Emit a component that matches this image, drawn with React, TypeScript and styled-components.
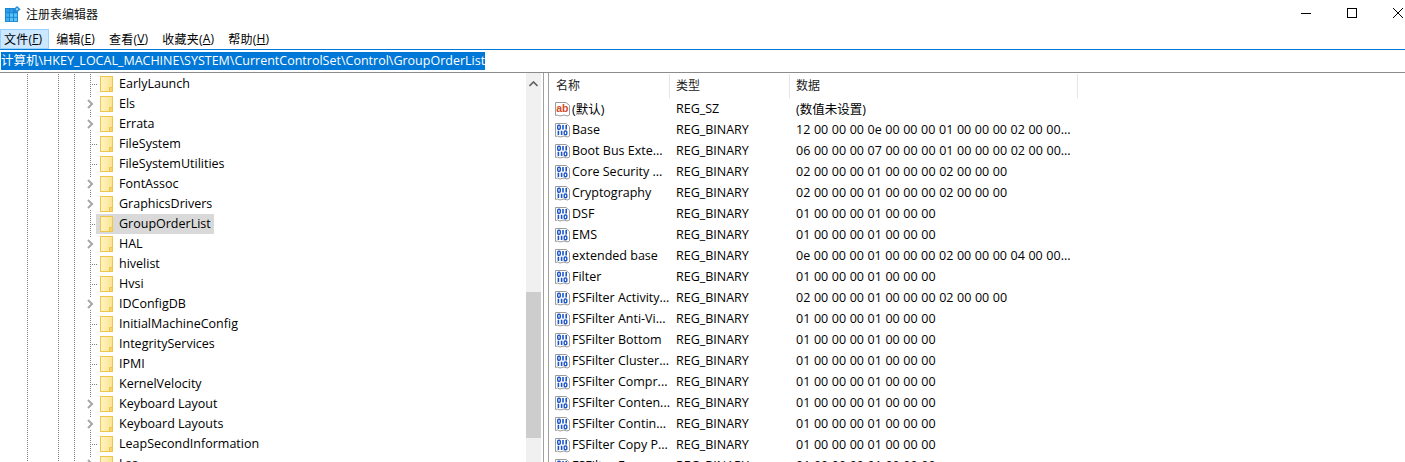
import * as React from "react"
import styled, { createGlobalStyle } from "styled-components"

const GlobalStyles = createGlobalStyle`
  html, body {
    margin: 0;
    padding: 0;
    background: #fff;
    overflow: hidden;
  }
`

const Window = styled.div`
  width: 1405px;
  height: 462px;
  overflow: hidden;
  display: flex;
  flex-direction: column;
  color: #000;
  font-family: "Open Sans", "Noto Sans CJK SC", sans-serif;
  font-size: 12.5px;
`

const TitleBar = styled.div`
  height: 29px;
  display: flex;
  align-items: center;
  padding: 0 0 1px 5px;
  box-sizing: border-box;
  flex: none;
`

const TitleText = styled.span`
  margin-left: 5px;
  font-size: 12px;
  color: #111;
`

const WindowButtons = styled.div`
  margin-left: auto;
  margin-right: -16px;
  margin-bottom: 2px;
  display: flex;
`

const WindowButton = styled.div`
  width: 46px;
  height: 26px;
  display: flex;
  align-items: center;
  justify-content: center;
`

const MenuBar = styled.div`
  height: 20px;
  flex: none;
  display: flex;
  border-bottom: 1px solid #0078d7;
`

const MenuItem = styled.div<{ $active?: boolean }>`
  height: 20px;
  padding: 0 6px 1px 3px;
  margin-right: 3px;
  display: flex;
  align-items: center;
  font-size: 12px;
  letter-spacing: 0.2px;
  box-sizing: border-box;
  background: ${(p) => (p.$active ? "#cce8ff" : "transparent")};
  border: 1px solid ${(p) => (p.$active ? "#99d1ff" : "transparent")};
`

const Hotkey = styled.u`
  text-underline-offset: 1px;
`

const AddressBar = styled.div`
  height: 23px;
  flex: none;
  display: flex;
  align-items: center;
  padding: 0 0 1px 1px;
  box-sizing: border-box;
  border-bottom: 1px solid #8c8c8c;
`

const AddressText = styled.span`
  background: #0078d7;
  color: #fff;
  height: 18px;
  line-height: 18px;
  font-size: 12.5px;
  white-space: nowrap;
`

const Panes = styled.div`
  flex: 1;
  display: flex;
  min-height: 0;
`

const TreePane = styled.div`
  width: 541px;
  flex: none;
  display: flex;
`

const Tree = styled.div`
  width: 526px;
  flex: none;
  padding-top: 1px;
  overflow: hidden;
`

const dots = "repeating-linear-gradient(to bottom, #808080 0 1px, transparent 1px 2px)"

const Guides = styled.div`
  flex: none;
  width: 86px;
  height: 20px;
  background-image: ${dots}, ${dots}, ${dots};
  background-size: 1px 100%;
  background-repeat: no-repeat;
  background-position: 27px 0, 58px 0, 74px 0;
`

const TreeRow = styled.div`
  height: 20px;
  display: flex;
  align-items: center;
`

const Expander = styled.div`
  width: 14px;
  height: 20px;
  flex: none;
  display: flex;
  align-items: center;
  background-image: ${dots};
  background-size: 1px 100%;
  background-repeat: no-repeat;
  background-position: 4px 0;
`

const BranchTick = styled.div`
  width: 6px;
  height: 1px;
  margin-left: 6px;
  background-image: repeating-linear-gradient(to right, #808080 0 1px, transparent 1px 2px);
`

const FolderSlot = styled.div`
  flex: none;
  width: 13px;
  height: 16px;
  display: flex;
  margin-right: 6px;
`

const TreeLabel = styled.div`
  height: 20px;
  padding-bottom: 1px;
  box-sizing: border-box;
  display: flex;
  align-items: center;
  white-space: nowrap;
`

const TreeEntry = styled.div<{ $selected?: boolean }>`
  display: flex;
  align-items: center;
  height: 20px;
  margin-left: -4px;
  padding: 0 3px 0 4px;
  background: ${(p) => (p.$selected ? "#d9d9d9" : "transparent")};
`

const Scrollbar = styled.div`
  width: 15px;
  flex: none;
  background: #f0f0f0;
  display: flex;
  flex-direction: column;
`

const ScrollArrow = styled.div`
  height: 22px;
  display: flex;
  align-items: center;
  justify-content: center;
  flex: none;
`

const ScrollThumb = styled.div`
  height: 146px;
  margin-top: 197px;
  flex: none;
  background: #cdcdcd;
`

const Splitter = styled.div`
  width: 4px;
  flex: none;
  border-left: 1px solid #a0a0a0;
  border-right: 1px solid #a0a0a0;
  margin-left: 2px;
`

const ListPane = styled.div`
  flex: 1;
  min-width: 0;
  overflow: hidden;
`

const ListHeader = styled.div`
  height: 24px;
  margin-top: 1px;
  display: grid;
  grid-template-columns: 120px 120px 288px;
  padding-left: 1px;
`

const HeaderCell = styled.div`
  display: flex;
  align-items: center;
  padding: 0 0 2px 6px;
  border-right: 1px solid #e5e5e5;
  font-size: 12px;
  color: #222;
`

const ListRow = styled.div`
  height: 21px;
  display: grid;
  grid-template-columns: 120px 120px 288px;
  align-items: center;
  padding-left: 1px;
  white-space: nowrap;
`

const NameCell = styled.div`
  display: flex;
  align-items: center;
  padding-left: 5px;
  gap: 2px;
`

const ValueCell = styled.div`
  padding-left: 6px;
`

const DataCell = styled(ValueCell)`
  word-spacing: 0.35px;
`

const Chevron = () => (
  <svg width="9" height="12" viewBox="0 0 9 12">
    <rect width="9" height="12" fill="#fff" />
    <path d="M2 2 L6 6 L2 10" fill="none" stroke="#a6a6a6" strokeWidth="2" />
  </svg>
)

const Folder = () => (
  <svg width="13" height="16" viewBox="0 0 13 16">
    <defs>
      <linearGradient id="folderFill" x1="0" x2="1" y1="0" y2="0">
        <stop offset="0" stopColor="#fff4c6" />
        <stop offset="1" stopColor="#fbe38f" />
      </linearGradient>
    </defs>
    <rect x="0.5" y="0.5" width="12" height="15" fill="url(#folderFill)" stroke="#eec64b" />
    <path d="M9.5 15 V11.5 H12.5" fill="#f8d766" stroke="#eec64b" />
    <rect x="10" y="12" width="2" height="3" fill="#f8d766" />
  </svg>
)

const DocShape = () => (
  <path d="M0.5 1.5 H11 L14.5 4.5 V14 L12 15 L9 14 L5 15 L2.5 14 L0.5 14.6 Z" fill="#fff" stroke="#9c9c9c" />
)

const BinIcon = () => (
  <svg width="15" height="16" viewBox="0 0 15 16">
    <DocShape />
    <rect x="2.7" y="3.2" width="2.6" height="4" rx="1" fill="none" stroke="#1c55c9" strokeWidth="1.4" />
    <path d="M8 3 V7.4 M11.2 3 V7.4" stroke="#1c55c9" strokeWidth="1.6" />
    <path d="M3.4 8.8 V13 M6.6 8.8 V13" stroke="#1c55c9" strokeWidth="1.6" />
    <rect x="9.2" y="9" width="2.6" height="3.8" rx="1" fill="none" stroke="#1c55c9" strokeWidth="1.4" />
  </svg>
)

const AbGlyph = styled.text`
  font-family: "Liberation Sans", sans-serif;
  font-size: 10.5px;
  font-weight: 700;
  fill: #d4492a;
`

const AbIcon = () => (
  <svg width="15" height="16" viewBox="0 0 15 16">
    <DocShape />
    <AbGlyph x="1.2" y="11">ab</AbGlyph>
  </svg>
)

const AppIcon = () => (
  <svg width="16" height="16" viewBox="0 0 16 16">
    <rect x="0" y="2" width="13" height="14" fill="#1a86d6" />
    <rect x="1" y="3" width="3" height="3.4" fill="#2f9be6" />
    <rect x="5" y="3" width="3" height="3.4" fill="#2f9be6" />
    <rect x="1" y="7.4" width="3" height="3.4" fill="#3fb0ee" />
    <rect x="5" y="7.4" width="3" height="3.4" fill="#5cc4f5" />
    <rect x="9" y="7.4" width="3" height="3.4" fill="#5cc4f5" />
    <rect x="1" y="11.8" width="3" height="3.4" fill="#3fb0ee" />
    <rect x="5" y="11.8" width="3" height="3.4" fill="#5cc4f5" />
    <rect x="9" y="11.8" width="3" height="3.4" fill="#5cc4f5" />
    <path d="M12 0 L15.6 3.2 L12 6.6 L8.6 3.2 Z" fill="#2a8fd0" />
    <rect x="11" y="2.2" width="2" height="2" fill="#8fd6f8" />
  </svg>
)

const treeItems: [string, boolean][] = [
  ["EarlyLaunch", false],
  ["Els", true],
  ["Errata", true],
  ["FileSystem", false],
  ["FileSystemUtilities", false],
  ["FontAssoc", true],
  ["GraphicsDrivers", true],
  ["GroupOrderList", false],
  ["HAL", true],
  ["hivelist", false],
  ["Hvsi", false],
  ["IDConfigDB", true],
  ["InitialMachineConfig", false],
  ["IntegrityServices", false],
  ["IPMI", false],
  ["KernelVelocity", false],
  ["Keyboard Layout", true],
  ["Keyboard Layouts", true],
  ["LeapSecondInformation", false],
  ["Lsa", true],
]

const menus: [string, string][] = [
  ["文件", "F"],
  ["编辑", "E"],
  ["查看", "V"],
  ["收藏夹", "A"],
  ["帮助", "H"],
]

const long1 = "12 00 00 00 0e 00 00 00 01 00 00 00 02 00 00..."
const long2 = "06 00 00 00 07 00 00 00 01 00 00 00 02 00 00..."
const long3 = "0e 00 00 00 01 00 00 00 02 00 00 00 04 00 00..."
const mid = "02 00 00 00 01 00 00 00 02 00 00 00"
const short = "01 00 00 00 01 00 00 00"

const rows: [string, string][] = [
  ["Base", long1],
  ["Boot Bus Exte...", long2],
  ["Core Security ...", mid],
  ["Cryptography", mid],
  ["DSF", short],
  ["EMS", short],
  ["extended base", long3],
  ["Filter", short],
  ["FSFilter Activity...", mid],
  ["FSFilter Anti-Vi...", short],
  ["FSFilter Bottom", short],
  ["FSFilter Cluster...", short],
  ["FSFilter Compr...", short],
  ["FSFilter Conten...", short],
  ["FSFilter Contin...", short],
  ["FSFilter Copy P...", short],
  ["FSFilter Encry...", short],
]

const App: React.FC = () => {
  return (
    <Window>
      <GlobalStyles />
      <TitleBar>
        <AppIcon />
        <TitleText>注册表编辑器</TitleText>
        <WindowButtons>
          <WindowButton>
            <svg width="10" height="10" viewBox="0 0 10 10"><path d="M0 5.5 H10" stroke="#000" /></svg>
          </WindowButton>
          <WindowButton>
            <svg width="10" height="10" viewBox="0 0 10 10"><rect x="0.5" y="0.5" width="9" height="9" fill="none" stroke="#000" /></svg>
          </WindowButton>
          <WindowButton>
            <svg width="10" height="10" viewBox="0 0 10 10"><path d="M0 0 L10 10 M10 0 L0 10" stroke="#000" /></svg>
          </WindowButton>
        </WindowButtons>
      </TitleBar>
      <MenuBar>
        {menus.map(([label, key], i) => (
          <MenuItem key={key} $active={i === 0}>
            {label}(<Hotkey>{key}</Hotkey>)
          </MenuItem>
        ))}
      </MenuBar>
      <AddressBar>
        <AddressText>计算机\HKEY_LOCAL_MACHINE\SYSTEM\CurrentControlSet\Control\GroupOrderList</AddressText>
      </AddressBar>
      <Panes>
        <TreePane>
          <Tree>
            {treeItems.map(([name, expandable]) => (
              <TreeRow key={name}>
                <Guides />
                <Expander>{expandable ? <Chevron /> : <BranchTick />}</Expander>
                <TreeEntry $selected={name === "GroupOrderList"}>
                  <FolderSlot><Folder /></FolderSlot>
                  <TreeLabel>{name}</TreeLabel>
                </TreeEntry>
              </TreeRow>
            ))}
          </Tree>
          <Scrollbar>
            <ScrollArrow>
              <svg width="9" height="6" viewBox="0 0 9 6"><path d="M0.5 5 L4.5 1 L8.5 5" fill="none" stroke="#606060" strokeWidth="1.6" /></svg>
            </ScrollArrow>
            <ScrollThumb />
          </Scrollbar>
        </TreePane>
        <Splitter />
        <ListPane>
          <ListHeader>
            <HeaderCell>名称</HeaderCell>
            <HeaderCell>类型</HeaderCell>
            <HeaderCell>数据</HeaderCell>
          </ListHeader>
          <ListRow>
            <NameCell><AbIcon />(默认)</NameCell>
            <ValueCell>REG_SZ</ValueCell>
            <DataCell>(数值未设置)</DataCell>
          </ListRow>
          {rows.map(([name, data]) => (
            <ListRow key={name}>
              <NameCell><BinIcon />{name}</NameCell>
              <ValueCell>REG_BINARY</ValueCell>
              <DataCell>{data}</DataCell>
            </ListRow>
          ))}
        </ListPane>
      </Panes>
    </Window>
  )
}

export default App
